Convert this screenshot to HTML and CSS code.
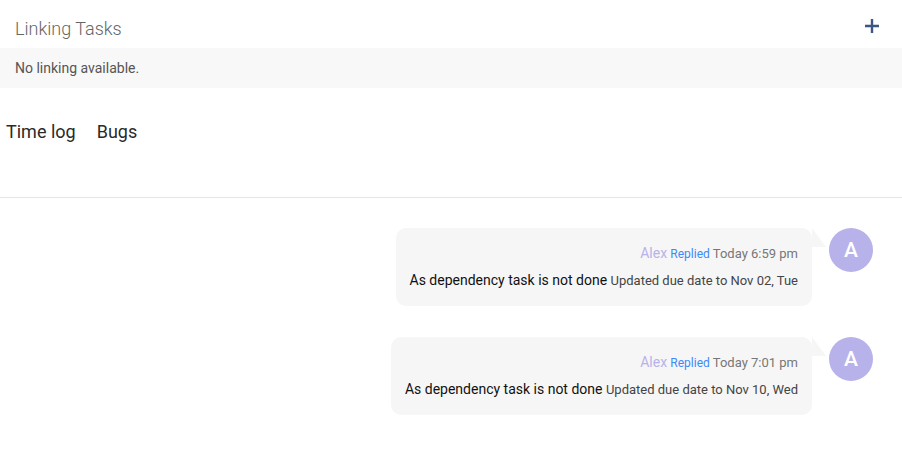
FILE: index.html
```html
<!DOCTYPE html>
<html lang="en">

<head>
    <meta charset="UTF-8">
    <meta name="viewport" content="width=device-width, initial-scale=1.0">
    <title>Task activity</title>
    <link rel="stylesheet" href="styles.css">
</head>

<body>

    <div class="linking">
        <div class="linking-head">
            <span class="linking-title">Linking Tasks</span>
            <button class="add-btn" title="Add linking">
                <svg width="16" height="16" viewBox="0 0 16 16">
                    <path d="M8 1v14M1 8h14" stroke="#3a5685" stroke-width="2.4" fill="none"/>
                </svg>
            </button>
        </div>
        <div class="linking-empty">No linking available.</div>
    </div>

    <!-- tabs -->
    <div class="tabs">
        <span class="tab">Time log</span>
        <span class="tab">Bugs</span>
    </div>

    <div class="activity">
        <div class="comment">
            <div class="bubble">
                <div class="meta">
                    <span class="author">Alex</span>
                    <span class="action">Replied</span>
                    <span class="time">Today 6:59 pm</span>
                </div>
                <div class="message">
                    As dependency task is not done <span class="detail">Updated due date to Nov 02, Tue</span>
                </div>
            </div>
            <div class="avatar">A</div>
        </div>
        <div class="comment">
            <div class="bubble">
                <div class="meta">
                    <span class="author">Alex</span>
                    <span class="action">Replied</span>
                    <span class="time">Today 7:01 pm</span>
                </div>
                <div class="message">
                    As dependency task is not done <span class="detail">Updated due date to Nov 10, Wed</span>
                </div>
            </div>
            <div class="avatar">A</div>
        </div>
    </div>

</body>

</html>
```

FILE: styles.css
```css
body {
    font-family: Roboto, "Liberation Sans", Arial, sans-serif;
    margin: 0;
    background-color: white;
    color: #333;
}

.linking-head {
    display: flex;
    justify-content: space-between;
    align-items: center;
    height: 48px;
    padding: 0 22px 0 15px;
}

.linking-title {
    font-size: 18px;
    font-weight: 300;
    color: #666;
    margin-top: 8px;
}

.add-btn {
    background: none;
    border: none;
    padding: 0;
    cursor: pointer;
    display: flex;
    margin-top: 4px;
}

.linking-empty {
    background-color: #f8f8f8;
    height: 40px;
    line-height: 40px;
    padding: 0 15px;
    font-size: 14px;
    color: #555;
}

.tabs {
    display: flex;
    gap: 21px;
    padding: 0 6px;
    height: 109px;
    align-items: center;
    border-bottom: 1px solid #e6e6e6;
}

.tab {
    font-size: 18px;
    color: #2a2a2a;
    margin-top: -22px;
}

.activity {
    display: flex;
    flex-direction: column;
    align-items: flex-end;
    gap: 31px;
    padding: 30px 29px 0 0;
}

.comment {
    display: flex;
    align-items: flex-start;
    gap: 17px;
}

.bubble {
    position: relative;
    background-color: #f6f6f6;
    border-radius: 10px;
    padding: 16px 14px 16px 14px;
    text-align: right;
}

/* tail pointing at the avatar */
.bubble::after {
    content: "";
    position: absolute;
    top: 0;
    right: -14px;
    width: 14px;
    height: 19px;
    background-color: #f6f6f6;
    clip-path: polygon(0 0, 100% 100%, 0 100%);
}

.meta {
    font-size: 13px;
    color: #777;
    line-height: 18px;
}

.author {
    font-size: 14px;
    color: #b8b2ea;
}

.action {
    font-size: 12px;
    color: #3d8af7;
}

.message {
    margin-top: 8px;
    font-size: 14px;
    color: #111;
    line-height: 18px;
}

.detail {
    font-size: 13px;
    color: #444;
}

.avatar {
    width: 44px;
    height: 44px;
    border-radius: 50%;
    background-color: #b8b2ea;
    color: white;
    font-size: 21px;
    font-weight: 500;
    display: flex;
    justify-content: center;
    align-items: center;
}
```
